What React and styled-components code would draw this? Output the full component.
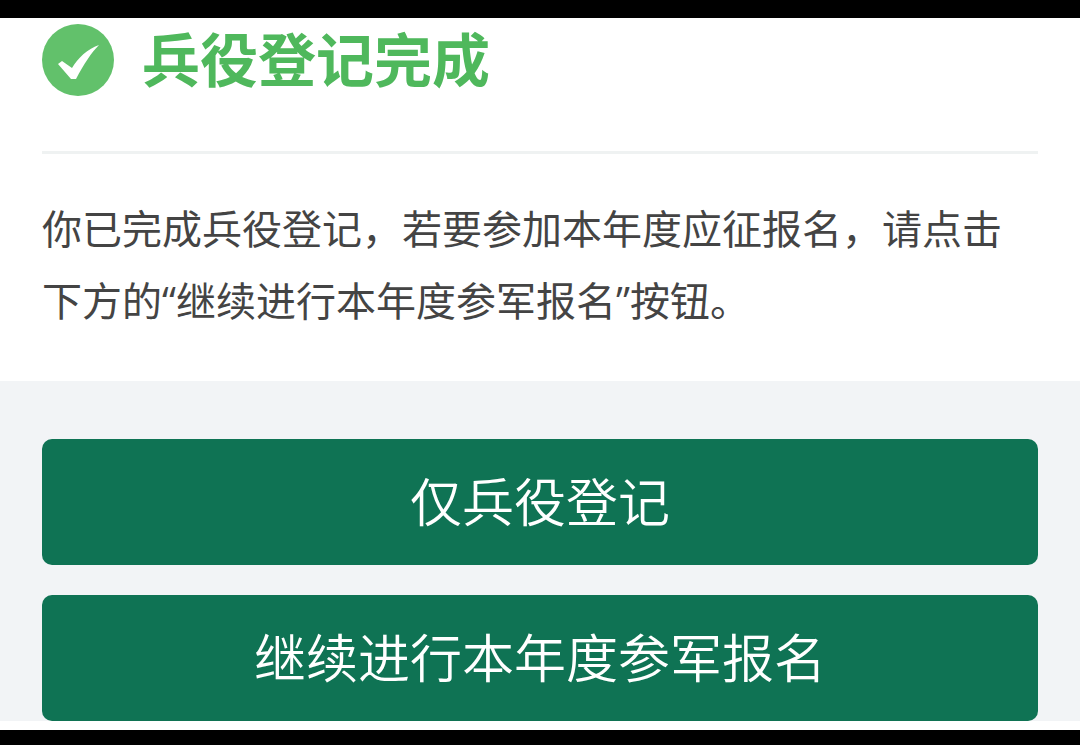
import React from "react";
import styled, { createGlobalStyle } from "styled-components";

const GlobalStyle = createGlobalStyle`
  * { box-sizing: border-box; }
  body {
    margin: 0;
    background: #fff;
    font-family: "Open Sans", "Noto Sans CJK SC", sans-serif;
  }
`;

const Page = styled.main`
  border-top: 18px solid #000;
  border-bottom: 15px solid #000;
  padding-bottom: 9px;
  background: #fff;
`;

const Notice = styled.section`
  padding: 0 42px 44px;
`;

const Header = styled.header`
  display: flex;
  align-items: flex-start;
  gap: 28px;
  height: 136px;
  padding-top: 6px;
  border-bottom: 3px solid #eff2f2;
`;

const StatusIcon = styled.svg`
  flex: none;
  width: 72px;
  height: 72px;
`;

const Title = styled.h1`
  margin: 0;
  font-size: 58px;
  font-weight: 700;
  line-height: 72px;
  color: #4fb85c;
`;

const Message = styled.p`
  margin: 39px 0 0;
  font-size: 40px;
  line-height: 72px;
  color: #444;
`;

const Actions = styled.section`
  display: flex;
  flex-direction: column;
  gap: 30px;
  padding: 58px 42px 0;
  background: #f2f4f6;
`;

const ActionButton = styled.button`
  width: 100%;
  padding: 25px 16px;
  border: 0;
  border-radius: 10px;
  background: #0f7354;
  color: #fff;
  font-family: inherit;
  font-size: 52px;
  font-weight: 350;
  line-height: 76px;
  text-align: center;
  cursor: pointer;
`;

export default function App() {
  return (
    <>
      <GlobalStyle />
      <Page lang="zh-CN">
        <Notice>
          <Header>
            <StatusIcon viewBox="0 0 72 72" aria-hidden="true">
              <circle cx="36" cy="36" r="36" fill="#62c16b" />
              <path
                d="M16 40 L20 37 L30 44 C36 34 45 25 57 21 C49 29 42 40 34 55 L29 55 Z"
                fill="#fff"
              />
            </StatusIcon>
            <Title>兵役登记完成</Title>
          </Header>
          <Message>
            你已完成兵役登记，若要参加本年度应征报名，请点击下方的“继续进行本年度参军报名”按钮。
          </Message>
        </Notice>
        <Actions>
          <ActionButton type="button">仅兵役登记</ActionButton>
          <ActionButton type="button">继续进行本年度参军报名</ActionButton>
        </Actions>
      </Page>
    </>
  );
}
